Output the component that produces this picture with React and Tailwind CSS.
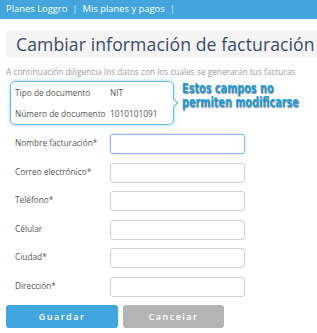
import React from 'react';

const FONT = { fontFamily: '"Open Sans", "Liberation Sans", sans-serif' };

const fields = [
  { label: 'Nombre facturación*', focus: true },
  { label: 'Correo electrónico*' },
  { label: 'Teléfono*' },
  { label: 'Célular' },
  { label: 'Ciudad*' },
  { label: 'Dirección*' },
];

export default function App() {
  return (
    <div className="w-[317px] h-[333px] overflow-hidden bg-white" style={FONT}>
      {/* Top bar */}
      <div className="h-[19px] bg-[#42a6dc] flex items-center px-[6px] text-[9.4px] text-white whitespace-nowrap">
        <span>Planes Loggro</span>
        <span className="mx-[5px] opacity-70">|</span>
        <span>Mis planes y pagos</span>
        <span className="mx-[5px] opacity-70">|</span>
      </div>

      <div className="pl-[6px]">
        {/* Title */}
        <div className="mt-[11px] h-[28px] w-[330px] bg-[#f4f4f4] rounded-[3px] flex items-center pl-[10px] whitespace-nowrap">
          <h1 className="text-[17.6px] text-[#3b4a6a] tracking-[0.1px]">Cambiar información de facturación</h1>
        </div>

        <p className="mt-[8px] text-[8.3px] text-[#9a9a9a] whitespace-nowrap">
          A continuación diligencia los datos con los cuales se generarán tus facturas
        </p>

        {/* Locked fields + callout */}
        <div className="mt-[3px] flex items-start">
          <div className="relative shrink-0 ml-[4px] w-[164px] h-[44px] rounded-[5px] border border-[#5ebbe8] shadow-[0_0_4px_rgba(66,166,220,0.45)] pl-[4px] text-[8.3px] text-[#555] whitespace-nowrap">
            <div className="flex h-[21px] items-center">
              <span className="w-[95px]">Tipo de documento</span>
              <span>NIT</span>
            </div>
            <div className="flex h-[21px] items-center">
              <span className="w-[95px]">Número de documento</span>
              <span>1010101091</span>
            </div>
            <div className="absolute right-[-4px] top-[18px] w-[6px] h-[6px] bg-white border-t border-r border-[#5ebbe8] rotate-45" />
          </div>
          <div
            className="ml-[8px] mt-[1px] flex flex-col gap-[1px] text-[14px] leading-[13px] font-bold text-[#1e9bdc] whitespace-nowrap"
            style={{
              fontFamily: '"DejaVu Sans Condensed", "Liberation Sans", sans-serif',
              textShadow: '1px 1px 1px rgba(0,0,0,0.45)',
              transform: 'scaleX(0.77)',
              transformOrigin: 'left',
            }}
          >
            <span>Estos campos no</span>
            <span>permiten modificarse</span>
          </div>
        </div>

        {/* Form */}
        <div className="mt-[9px] flex flex-col gap-[8.5px]">
          {fields.map((f) => (
            <div key={f.label} className="flex items-start">
              <label className="w-[104px] pl-[9px] pt-[3px] text-[8.3px] text-[#555] whitespace-nowrap">{f.label}</label>
              <input
                className={`w-[135px] h-[20px] rounded-[3px] border outline-none ${
                  f.focus
                    ? 'border-[#8db5e8] shadow-[0_0_2px_rgba(100,150,230,0.5)]'
                    : 'border-[#cfcfcf]'
                }`}
              />
            </div>
          ))}
        </div>

        {/* Buttons */}
        <div className="mt-[8px] flex gap-[5px]">
          <button className="w-[112px] h-[23px] rounded-[3px] bg-[#41a6dd] text-white text-[9px] font-semibold tracking-[1.5px]">
            Guardar
          </button>
          <button className="w-[101px] h-[23px] rounded-[3px] bg-[#b4b4b4] text-white text-[9px] font-semibold tracking-[1.5px]">
            Cancelar
          </button>
        </div>
      </div>
    </div>
  );
}
